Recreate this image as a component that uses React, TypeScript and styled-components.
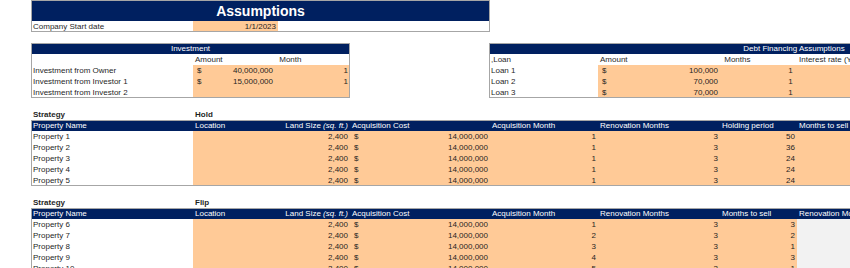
import React from 'react';
import styled, { createGlobalStyle } from 'styled-components';

type Fill = 'white' | 'orange' | 'gray' | 'navy';
type Align = 'left' | 'right' | 'center';

const NAVY = '#002060';
const ORANGE = '#FFCA97';
const GRAY = '#F2F2F2';
const BORDER = '#A6A6A6';

const fills: Record<Fill, string> = { white: '#ffffff', orange: ORANGE, gray: GRAY, navy: NAVY };

const Global = createGlobalStyle`
  html, body { margin: 0; padding: 0; background: #fff; overflow: hidden; }
  body { font-family: "Liberation Sans", Arial, sans-serif; font-size: 8px; color: #1f1f1f; }
`;

const Page = styled.div`
  width: 850px;
  height: 268px;
  overflow: hidden;
  padding-left: 31px;
  box-sizing: border-box;
  display: flex;
  flex-direction: column;
`;

const Block = styled.div<{ $width: number }>`
  width: ${(p) => p.$width}px;
  flex: none;
  outline: 1px solid ${BORDER};
  outline-offset: -1px;
  position: relative;
`;

const TitleBar = styled.div`
  height: 21px;
  background: ${NAVY};
  color: #fff;
  font-weight: 700;
  font-size: 14px;
  display: flex;
  align-items: center;
  justify-content: center;
`;

const Grid = styled.div<{ $cols: number[] }>`
  display: grid;
  grid-template-columns: ${(p) => p.$cols.map((c) => `${c}px`).join(' ')};
`;

const Cell = styled.div<{ $fill?: Fill; $align?: Align; $bold?: boolean; $span?: number; $money?: boolean }>`
  grid-column: span ${(p) => p.$span ?? 1};
  height: 11px;
  line-height: 11px;
  padding: 0 2px;
  white-space: nowrap;
  overflow: hidden;
  box-sizing: border-box;
  background: ${(p) => fills[p.$fill ?? 'white']};
  color: ${(p) => (p.$fill === 'navy' ? '#ffffff' : '#1f1f1f')};
  font-weight: ${(p) => (p.$bold ? 700 : 400)};
  text-align: ${(p) => p.$align ?? 'left'};
  display: ${(p) => (p.$money ? 'flex' : 'block')};
  justify-content: space-between;
  padding-left: ${(p) => (p.$money ? '4px' : '2px')};
`;

const Spacer = styled.div`
  height: 11px;
  flex: none;
`;

const TopRow = styled.div`
  display: flex;
  gap: 139px;
  flex: none;
`;

const Italic = styled.i`
  font-style: italic;
`;

const StrategyRow = styled(Grid)`
  flex: none;
`;

const PROP_COLS = [162, 82, 75, 140, 108, 122, 77, 120];

const Money: React.FC<{ value: string; fill?: Fill }> = ({ value, fill = 'orange' }) => (
  <Cell $fill={fill} $money>
    <span>$</span>
    <span>{value}</span>
  </Cell>
);

type PropRow = { name: string; e: string; f: string; g: string };

const PropertyTable: React.FC<{ headers: string[]; rows: PropRow[]; lastFill: Fill }> = ({ headers, rows, lastFill }) => (
  <Block $width={PROP_COLS.reduce((a, b) => a + b, 0)}>
    <Grid $cols={PROP_COLS}>
      <Cell $fill="navy">Property Name</Cell>
      <Cell $fill="navy">Location</Cell>
      <Cell $fill="navy" $align="right">
        Land Size <Italic>(sq. ft.)</Italic>
      </Cell>
      <Cell $fill="navy">Acquisition Cost</Cell>
      {headers.map((h, i) => (
        <Cell key={i} $fill="navy">
          {h}
        </Cell>
      ))}
      {rows.map((r) => (
        <React.Fragment key={r.name}>
          <Cell>{r.name}</Cell>
          <Cell $fill="orange" />
          <Cell $fill="orange" $align="right">2,400</Cell>
          <Money value="14,000,000" />
          <Cell $fill="orange" $align="right">{r.e}</Cell>
          <Cell $fill="orange" $align="right">{r.f}</Cell>
          <Cell $fill="orange" $align="right">{r.g}</Cell>
          <Cell $fill={lastFill} />
        </React.Fragment>
      ))}
    </Grid>
  </Block>
);

const holdRows: PropRow[] = [
  { name: 'Property 1', e: '1', f: '3', g: '50' },
  { name: 'Property 2', e: '1', f: '3', g: '36' },
  { name: 'Property 3', e: '1', f: '3', g: '24' },
  { name: 'Property 4', e: '1', f: '3', g: '24' },
  { name: 'Property 5', e: '1', f: '3', g: '24' },
];

const flipRows: PropRow[] = [
  { name: 'Property 6', e: '1', f: '3', g: '3' },
  { name: 'Property 7', e: '2', f: '3', g: '2' },
  { name: 'Property 8', e: '3', f: '3', g: '1' },
  { name: 'Property 9', e: '4', f: '3', g: '3' },
  { name: 'Property 10', e: '5', f: '3', g: '1' },
];

export default function App() {
  return (
    <>
      <Global />
      <Page>
        <Block $width={459}>
          <TitleBar>Assumptions</TitleBar>
          <Grid $cols={[162, 85, 212]}>
            <Cell>Company Start date</Cell>
            <Cell $fill="orange" $align="right">1/1/2023</Cell>
            <Cell />
          </Grid>
        </Block>
        <Spacer />
        <TopRow>
          <Block $width={319}>
            <Grid $cols={[162, 82, 75]}>
              <Cell $fill="navy" $span={3} $align="center">Investment</Cell>
              <Cell />
              <Cell>Amount</Cell>
              <Cell>&nbsp;Month</Cell>
              <Cell>Investment from Owner</Cell>
              <Money value="40,000,000" />
              <Cell $fill="orange" $align="right">1</Cell>
              <Cell>Investment from Investor 1</Cell>
              <Money value="15,000,000" />
              <Cell $fill="orange" $align="right">1</Cell>
              <Cell>Investment from Investor 2</Cell>
              <Cell $fill="orange" />
              <Cell $fill="orange" />
            </Grid>
          </Block>
          <Block $width={610}>
            <Grid $cols={[109, 122, 77, 302]}>
              <Cell $fill="navy" $span={4} $align="center">Debt Financing Assumptions</Cell>
              <Cell>,Loan</Cell>
              <Cell>Amount</Cell>
              <Cell>&nbsp;Months</Cell>
              <Cell>Interest rate (Year)</Cell>
              {['Loan 1', 'Loan 2', 'Loan 3'].map((l, i) => (
                <React.Fragment key={l}>
                  <Cell>{l}</Cell>
                  <Money value={i === 0 ? '100,000' : '70,000'} />
                  <Cell $fill="orange" $align="right">1&nbsp;</Cell>
                  <Cell $fill="orange" />
                </React.Fragment>
              ))}
            </Grid>
          </Block>
        </TopRow>
        <Spacer />
        <StrategyRow $cols={[162, 82]}>
          <Cell $bold>Strategy</Cell>
          <Cell $bold>Hold</Cell>
        </StrategyRow>
        <PropertyTable
          headers={['Acquisition  Month', 'Renovation Months', 'Holding period', 'Months to sell']}
          rows={holdRows}
          lastFill="orange"
        />
        <Spacer />
        <StrategyRow $cols={[162, 82]}>
          <Cell $bold>Strategy</Cell>
          <Cell $bold>Flip</Cell>
        </StrategyRow>
        <PropertyTable
          headers={['Acquisition  Month', 'Renovation Months', 'Months to sell', 'Renovation Months']}
          rows={flipRows}
          lastFill="gray"
        />
      </Page>
    </>
  );
}
